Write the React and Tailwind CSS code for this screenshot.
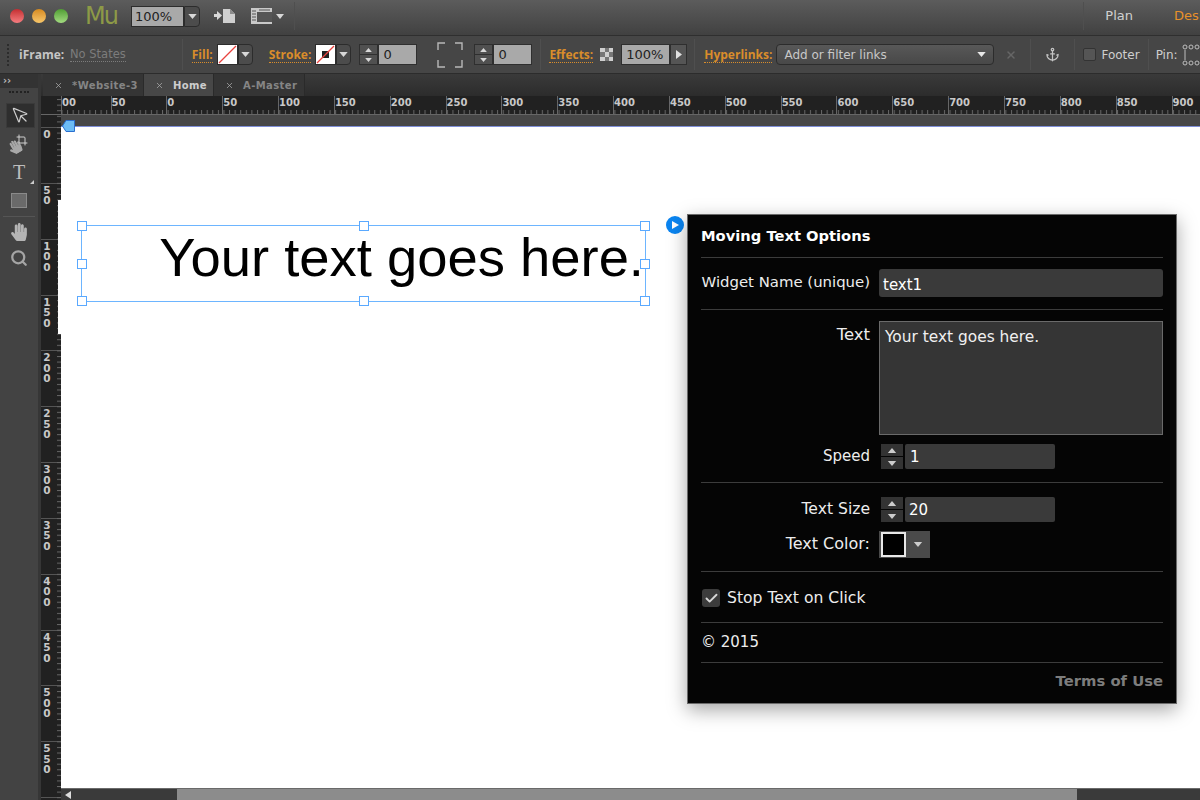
import { Anchor, Check, Crop, MousePointer, Search, X } from "lucide-react";
import { FaHandPaper } from "react-icons/fa";

const rulerTop = ["00", "50", "0", "50", "100", "150", "200", "250", "300", "350", "400", "450", "500", "550", "600", "650", "700", "750", "800", "850", "900"];
const rulerSide = ["0", "50", "100", "150", "200", "250", "300", "350", "400", "450", "500", "550", "600"];
const handles = [
  "-left-[5px] -top-[5px]", "left-1/2 -ml-[5px] -top-[5px]", "-right-[5px] -top-[5px]",
  "-left-[5px] top-1/2 -mt-[5px]", "-right-[5px] top-1/2 -mt-[5px]",
  "-left-[5px] -bottom-[5px]", "left-1/2 -ml-[5px] -bottom-[5px]", "-right-[5px] -bottom-[5px]",
];

function Tri({ up, color = "#d8d8d8", w = 9, h = 5 }) {
  return (
    <svg width={w} height={h} viewBox="0 0 10 6">
      <path d={up ? "M5 0L10 6H0z" : "M0 0H10L5 6z"} fill={color} />
    </svg>
  );
}

function Sep({ className = "" }) {
  return <div className={"w-px shrink-0 self-stretch bg-[#3a3a3a] border-r border-[#4f4f4f] " + className} />;
}

function Drop({ w = "w-[15px]" }) {
  return (
    <div className={w + " h-[21px] bg-[#4c4c4c] border border-[#2c2c2c] rounded-r-sm flex items-center justify-center"}>
      <Tri />
    </div>
  );
}

function Spinner() {
  return (
    <div className="w-[19px] h-[21px] flex flex-col gap-px border border-[#2f2f2f] bg-[#2f2f2f]">
      <div className="flex-1 bg-[#505050] flex items-center justify-center"><Tri up w={7} h={4} /></div>
      <div className="flex-1 bg-[#505050] flex items-center justify-center"><Tri w={7} h={4} /></div>
    </div>
  );
}

function GrayInput({ w, children }) {
  return (
    <div className={w + " h-[21px] bg-[#a9a9a9] border border-[#2f2f2f] pl-[4px] text-[13px] leading-[19px] text-[#222]"}>{children}</div>
  );
}

function OrangeLabel({ children, className = "" }) {
  return (
    <span className={"whitespace-nowrap font-['Open_Sans',sans-serif] text-[12px] font-bold text-[#d98d2b] border-b border-dotted border-[#d98d2b] leading-[15px] " + className}>{children}</span>
  );
}

function Swatch({ stroke }) {
  return (
    <div className="relative w-[21px] h-[21px] bg-white border border-[#2c2c2c]">
      {stroke && <div className="absolute left-[6px] top-[6px] w-[7px] h-[7px] bg-[#222]" />}
      <svg className="absolute inset-0" width="19" height="19" viewBox="0 0 19 19">
        <path d="M1 18L18 1" stroke="#e8433f" strokeWidth="1.2" />
      </svg>
    </div>
  );
}

function TopBar() {
  return (
    <div className="h-[36px] flex items-center pb-[3px] bg-gradient-to-b from-[#5c5c5c] to-[#414141] border-b border-[#2f2f2f]">
      <div className="ml-[10px] w-[14px] h-[14px] rounded-full bg-gradient-to-b from-[#c42b30] to-[#f57c80]" />
      <div className="ml-[8px] w-[14px] h-[14px] rounded-full bg-gradient-to-b from-[#d68a1c] to-[#f8c769]" />
      <div className="ml-[8px] w-[14px] h-[14px] rounded-full bg-gradient-to-b from-[#4f9e32] to-[#a3dc80]" />
      <span className="ml-[17px] w-[32px] text-[24px] leading-none text-[#8d9a47] tracking-[-2px]">Mu</span>
      <div className="ml-[14px] flex items-center">
        <div className="w-[53px] h-[21px] bg-[#a9a9a9] border border-[#2c2c2c] pl-[3px] text-[13px] leading-[19px] text-[#222]">100%</div>
        <Drop w="w-[16px]" />
      </div>
      <svg className="ml-[14px]" width="22" height="16" viewBox="0 0 22 16">
        <path d="M0 6H3V3L8 7.5L3 12V9H0z" fill="#d8d8d8" />
        <path d="M9 1H16L21 6V15H9z" fill="#cfcfcf" />
        <path d="M16 1V6H21" fill="#8c8c8c" />
      </svg>
      <svg className="ml-[15px]" width="21" height="18" viewBox="0 0 21 18">
        <rect x="0" y="1" width="21" height="16" fill="#c9c9c9" />
        <rect x="6" y="5" width="15" height="10" fill="#555" />
        <path d="M1 4H5M1 7H5M1 10H5M1 13H5M8 3H19" stroke="#555" />
      </svg>
      <div className="ml-[4px]"><Tri w={8} h={5} /></div>
      <Sep className="ml-[10px] my-[2px]" />
      <div className="flex-1" />
      <Sep className="my-[2px]" />
      <span className="ml-[21px] text-[13px] text-[#d0d0d0]">Plan</span>
      <span className="ml-[41px] w-[26px] overflow-hidden text-[13px] text-[#e8912a]">Design</span>
    </div>
  );
}

function OptionBar() {
  return (
    <div className="h-[38px] flex items-center bg-[#464646] border-b border-[#2c2c2c] overflow-hidden">
      <div className="ml-[7px] w-[2px] h-[22px] border-l-2 border-dotted border-[#2c2c2c]" />
      <span className="ml-[10px] w-[45px] font-['Open_Sans',sans-serif] text-[12px] font-bold text-[#c6c6c6] whitespace-nowrap">iFrame:</span>
      <span className="ml-[6px] w-[56px] text-[11.5px] text-[#7c7c7c] border-b border-dotted border-[#7c7c7c] leading-[14px] whitespace-nowrap">No States</span>
      <Sep className="ml-[56px] my-[3px]" />
      <OrangeLabel className="ml-[9px]">Fill:</OrangeLabel>
      <div className="ml-[4px] flex items-center"><Swatch /><Drop /></div>
      <OrangeLabel className="ml-[16px]">Stroke:</OrangeLabel>
      <div className="ml-[4px] flex items-center"><Swatch stroke /><Drop /></div>
      <div className="ml-[8px] flex items-center"><Spinner /><GrayInput w="w-[39px]">0</GrayInput></div>
      <svg className="ml-[20px] shrink-0" width="26" height="26" viewBox="0 0 26 26" fill="none" stroke="#b8b8b8" strokeWidth="1.4">
        <path d="M1 8V1H8M18 1H25V8M1 18V25H8M18 25H25V18" />
      </svg>
      <div className="ml-[11px] flex items-center"><Spinner /><GrayInput w="w-[39px]">0</GrayInput></div>
      <Sep className="ml-[8px] my-[3px]" />
      <OrangeLabel className="ml-[8px]">Effects:</OrangeLabel>
      <div className="ml-[7px] w-[13px] h-[13px] shrink-0 bg-[#cfcfcf] grid grid-cols-3 grid-rows-3">
        {[0, 1, 0, 1, 0, 1, 0, 1, 0].map((v, i) => <div key={i} className={v ? "bg-[#777]" : ""} />)}
      </div>
      <div className="ml-[8px] flex items-center">
        <GrayInput w="w-[49px]">100%</GrayInput>
        <div className="w-[17px] h-[21px] bg-[#555] border border-[#2f2f2f] flex items-center justify-center">
          <svg width="6" height="9" viewBox="0 0 6 9"><path d="M0 0L6 4.5L0 9z" fill="#e0e0e0" /></svg>
        </div>
      </div>
      <Sep className="ml-[7px] my-[3px]" />
      <OrangeLabel className="ml-[9px]">Hyperlinks:</OrangeLabel>
      <div className="ml-[4px] w-[218px] shrink-0 h-[21px] flex items-center justify-between bg-gradient-to-b from-[#585858] to-[#484848] border border-[#2c2c2c] rounded-sm px-[7px]">
        <span className="text-[12px] text-[#c8c8c8] whitespace-nowrap">Add or filter links</span>
        <Tri color="#e8e8e8" />
      </div>
      <X className="ml-[11px] shrink-0" size={12} strokeWidth={3} color="#666" />
      <Sep className="ml-[13px] my-[3px]" />
      <Anchor className="ml-[14px] shrink-0" size={15} strokeWidth={2} color="#c4c4c4" />
      <Sep className="ml-[14px] my-[3px]" />
      <div className="ml-[8px] w-[13px] h-[13px] shrink-0 bg-[#555] border border-[#333] rounded-[2px]" />
      <span className="ml-[5px] text-[12px] text-[#cfcfcf]">Footer</span>
      <Sep className="ml-[8px] my-[3px]" />
      <span className="ml-[7px] text-[12px] text-[#cfcfcf]">Pin:</span>
      <svg className="ml-[4px] shrink-0" width="26" height="22" viewBox="0 0 26 22" fill="none" stroke="#bdbdbd">
        <circle cx="3" cy="3" r="2" /><circle cx="9" cy="3" r="2" /><circle cx="15" cy="3" r="2" />
        <circle cx="3" cy="19" r="2" /><circle cx="9" cy="19" r="2" /><circle cx="15" cy="19" r="2" />
        <path d="M3 6V16" />
      </svg>
    </div>
  );
}

function ToolRail() {
  return (
    <div className="w-[41px] shrink-0 flex flex-col bg-[#434343] border-r-[3px] border-[#363636]">
      <div className="h-[14px] bg-[#333] text-[10px] leading-[13px] pl-[3px] font-bold text-[#bbb]">››</div>
      <div className="mx-[9px] mt-[3px] h-[3px] border-t-2 border-dotted border-[#222]" />
      <div className="ml-[6px] mr-[3px] mt-[9px] h-[25px] bg-[#2e2e2e] border border-[#3a3a3a] flex items-center justify-center">
        <MousePointer size={19} color="#cfcfcf" strokeWidth={1.5} />
      </div>
      <div className="relative mt-[4px] h-[24px] flex items-center justify-center">
        <FaHandPaper size={14} color="#a8a8a8" className="-ml-[8px] mt-[5px] -rotate-[30deg]" />
        <Crop size={12} color="#d0d0d0" className="absolute left-[16px] top-[2px]" />
      </div>
      <div className="relative h-[32px] flex items-center justify-center">
        <span className="text-[20px] leading-none text-[#bdbdbd] font-['Liberation_Serif',serif]">T</span>
        <svg className="absolute right-[4px] bottom-[4px]" width="4" height="4" viewBox="0 0 4 4"><path d="M4 0V4H0z" fill="#ccc" /></svg>
      </div>
      <div className="mx-[11px] mt-[5px] h-[15px] bg-[#6a6a6a] border border-[#8a8a8a]" />
      <div className="mx-[3px] mt-[8px] h-px bg-[#555]" />
      <div className="mt-[5px] h-[20px] flex items-center justify-center">
        <FaHandPaper size={18} color="#b4b4b4" />
      </div>
      <div className="mt-[6px] h-[20px] flex items-center justify-center">
        <Search size={18} color="#a5a5a5" strokeWidth={3} />
      </div>
    </div>
  );
}

function Tab({ label, active, w }) {
  return (
    <div className={w + " flex items-center pl-[11px] border-r border-[#2a2a2a] " + (active ? "bg-[#474747]" : "bg-[#353535]")}>
      <X size={9} color="#aaa" strokeWidth={2} />
      <span className={"ml-[9px] text-[10px] font-bold tracking-[0.4px] whitespace-nowrap " + (active ? "text-[#cdcdcd]" : "text-[#858585]")}>{label}</span>
    </div>
  );
}

function HRuler() {
  return (
    <div className="relative h-[19px] flex bg-[#212121] overflow-hidden border-b border-[#666]">
      {rulerTop.map((n, i) => (
        <div key={i} className={(i === 0 ? "w-[49.5px]" : "w-[55.85px]") + " shrink-0 h-full border-l border-[#666] pt-px text-[10px] leading-[12px] font-bold text-[#c8c8c8]"}>{n}</div>
      ))}
      <svg className="absolute left-0 bottom-0" width="1139" height="4">
        <defs>
          <pattern id="hticks" width="5.585" height="4" patternUnits="userSpaceOnUse" x="0.5">
            <rect width="1" height="4" fill="#666" />
          </pattern>
        </defs>
        <rect width="1139" height="4" fill="url(#hticks)" />
      </svg>
    </div>
  );
}

function VRuler() {
  return (
    <div className="relative w-[20px] shrink-0 bg-[#212121] overflow-hidden flex flex-col pt-[31px]">
      <div className="absolute left-0 right-0 top-[18px] h-px bg-[#666]" />
      {rulerSide.map((n, i) => (
        <div key={i} className="h-[55.85px] shrink-0 border-t border-[#555] pl-[2px] pt-[1px] flex flex-col">
          {n.split("").map((d, j) => (
            <span key={j} className="w-[8px] text-center text-[10.5px] leading-[10.5px] font-bold text-[#c8c8c8]">{d}</span>
          ))}
        </div>
      ))}
      <svg className="absolute right-0 top-0" width="4" height="704">
        <defs>
          <pattern id="vticks" width="4" height="5.585" patternUnits="userSpaceOnUse" y="31">
            <rect width="4" height="1" fill="#666" />
          </pattern>
        </defs>
        <rect width="4" height="704" fill="url(#vticks)" />
      </svg>
    </div>
  );
}

function Divider({ className = "" }) {
  return <div className={"h-px bg-[#3c3c3c] " + className} />;
}

function Label({ children, size = "text-[15px]" }) {
  return <div className={"w-[169px] mr-[9px] pb-[2px] shrink-0 text-right leading-[20px] text-[#ededed] whitespace-nowrap " + size}>{children}</div>;
}

function DarkSpinner() {
  return (
    <div className="w-[22px] h-[25px] ml-[2px] flex flex-col gap-px">
      <div className="flex-1 bg-[#333] flex items-center justify-center"><Tri up w={10} h={5} color="#ccc" /></div>
      <div className="flex-1 bg-[#333] flex items-center justify-center"><Tri w={10} h={5} color="#ccc" /></div>
    </div>
  );
}

function MovingTextPanel() {
  return (
    <div className="absolute left-[626px] top-[87px] w-[490px] h-[490px] bg-[#050505] border border-[#6a6a6a] shadow-[0_6px_18px_rgba(0,0,0,0.35)] px-[13px] flex flex-col">
      <div className="mt-[11px] h-[20px] text-[14.7px] leading-[20px] font-bold text-white whitespace-nowrap">Moving Text Options</div>
      <Divider className="mt-[11px]" />
      <div className="mt-[11px] flex items-center h-[28px]">
        <Label size="text-[14.9px]">Widget Name (unique)</Label>
        <div className="flex-1 h-[28px] bg-[#3a3a3a] rounded-[3px] pl-[4px] pt-[4px] text-[15px] leading-[24px] text-white">text1</div>
      </div>
      <Divider className="mt-[12px]" />
      <div className="mt-[11px] flex items-start h-[115px]">
        <div className="pt-[4px]"><Label size="text-[16.5px]">Text</Label></div>
        <div className="flex-1 h-[114px] bg-[#353535] border border-[#6a6a6a] pl-[5px] pt-[3px] text-[15.4px] leading-[24px] text-[#f0f0f0] whitespace-nowrap">Your text goes here.</div>
      </div>
      <div className="mt-[8px] flex items-center h-[25px]">
        <Label>Speed</Label>
        <DarkSpinner />
        <div className="ml-[2px] w-[150px] h-[25px] bg-[#3a3a3a] rounded-[2px] pl-[5px] text-[15px] leading-[27px] text-white">1</div>
      </div>
      <Divider className="mt-[13px]" />
      <div className="mt-[14px] flex items-center h-[25px]">
        <Label size="text-[15.6px]">Text Size</Label>
        <DarkSpinner />
        <div className="ml-[2px] w-[150px] h-[25px] bg-[#3a3a3a] rounded-[2px] pl-[4px] text-[15px] leading-[27px] text-white">20</div>
      </div>
      <div className="mt-[9px] flex items-center h-[27px]">
        <Label size="text-[16px]">Text Color:</Label>
        <div className="w-[51px] h-[27px] bg-[#4a4a4a] flex items-center pl-[2px]">
          <div className="w-[25px] h-[25px] bg-black border-2 border-[#e8e8e8]" />
          <div className="flex-1 flex justify-center"><Tri w={10} h={5} color="#ccc" /></div>
        </div>
      </div>
      <Divider className="mt-[13px]" />
      <div className="mt-[16px] flex items-center h-[20px]">
        <div className="ml-[1px] w-[18px] h-[18px] bg-[#3c3c3c] rounded-[3px] flex items-center justify-center">
          <Check size={15} strokeWidth={3} color="#d8d8d8" />
        </div>
        <span className="ml-[7px] text-[15.6px] leading-[20px] text-[#ededed] whitespace-nowrap">Stop Text on Click</span>
      </div>
      <Divider className="mt-[14px]" />
      <div className="mt-[9px] h-[20px] text-[15px] leading-[20px] text-[#ededed]">© 2015</div>
      <Divider className="mt-[10px]" />
      <div className="mt-[8px] h-[20px] text-right text-[14.8px] leading-[20px] font-bold text-[#7d7d7d] whitespace-nowrap">Terms of Use</div>
    </div>
  );
}

export default function App() {
  return (
    <div className="relative w-[1200px] h-[800px] overflow-hidden flex flex-col bg-[#434343] font-['DejaVu_Sans',sans-serif]">
      <TopBar />
      <OptionBar />
      <div className="flex-1 min-h-0 flex">
        <ToolRail />
        <div className="flex-1 min-w-0 flex flex-col">
          <div className="h-[22px] shrink-0 flex bg-gradient-to-b from-[#3a3a3a] to-[#2c2c2c] pl-[2px]">
            <Tab label="*Website-3" w="w-[101px]" />
            <Tab label="Home" active w="w-[70px]" />
            <Tab label="A-Master" w="w-[91px]" />
          </div>
          <div className="flex-1 min-h-0 flex">
            <VRuler />
            <div className="flex-1 min-w-0 flex flex-col">
              <HRuler />
              <div className="relative h-[12px] shrink-0 bg-[#474747] border-b border-[#7f8fd8]">
                <svg className="absolute left-[1px] top-[5px] z-10" width="13" height="12" viewBox="0 0 13 12">
                  <path d="M4 0.5H12.5V11.5H4L0.5 6z" fill="#6cbcf5" stroke="#2a6fd0" />
                </svg>
              </div>
              <div className="relative flex-1 min-h-0 bg-white font-['Liberation_Sans',sans-serif]">
                <div className="absolute -left-[3px] top-[73px] w-[3px] h-[134px] bg-white" />
                <div className="absolute left-[20px] top-[98px] w-[565px] h-[77px] border border-[#6db5ff] flex items-center justify-end pr-[1px] pb-[10px]">
                  <span className="text-[54.4px] leading-none text-black whitespace-nowrap">Your text goes here.</span>
                  {handles.map((h) => (
                    <div key={h} className={"absolute w-[10px] h-[10px] bg-white border border-[#5aa9ff] " + h} />
                  ))}
                </div>
                <div className="absolute left-[605px] top-[89px] w-[18px] h-[18px] rounded-full bg-[#0a84f0] flex items-center justify-center">
                  <svg width="7" height="8" viewBox="0 0 7 8"><path d="M0 0L7 4L0 8z" fill="#fff" /></svg>
                </div>
                <div className="font-['DejaVu_Sans',sans-serif]"><MovingTextPanel /></div>
              </div>
              <div className="h-[12px] shrink-0 flex bg-[#3a3a3a] border-t border-[#6a6a6a]">
                <div className="w-[116px] pl-[4px] flex items-center">
                  <svg width="6" height="8" viewBox="0 0 6 8"><path d="M6 0V8L0 4z" fill="#ddd" /></svg>
                </div>
                <div className="w-[900px] bg-[#8c8c8c]" />
              </div>
            </div>
          </div>
        </div>
      </div>
    </div>
  );
}
